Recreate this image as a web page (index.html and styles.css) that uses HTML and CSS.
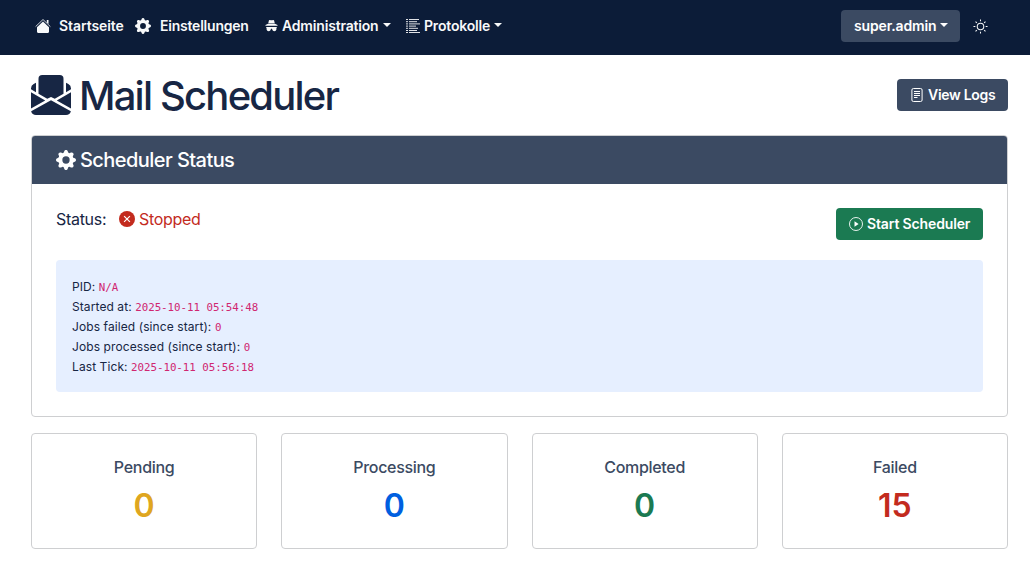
FILE: index.html
```html
<!DOCTYPE html>
<html lang="de">
<head>
<meta charset="utf-8">
<title>Mail Scheduler</title>
<link rel="stylesheet" href="styles.css">
</head>
<body>
<svg class="defs" width="0" height="0">
  <symbol id="gear" viewBox="0 0 16 16"><path d="M9.405 1.05c-.413-1.4-2.397-1.4-2.81 0l-.1.34a1.464 1.464 0 0 1-2.105.872l-.31-.17c-1.283-.698-2.686.705-1.987 1.987l.169.311c.446.82.023 1.841-.872 2.105l-.34.1c-1.4.413-1.4 2.397 0 2.81l.34.1a1.464 1.464 0 0 1 .872 2.105l-.17.31c-.698 1.283.705 2.686 1.987 1.987l.311-.169a1.464 1.464 0 0 1 2.105.872l.1.34c.413 1.4 2.397 1.4 2.81 0l.1-.34a1.464 1.464 0 0 1 2.105-.872l.31.17c1.283.698 2.686-.705 1.987-1.987l-.169-.311a1.464 1.464 0 0 1 .872-2.105l.34-.1c1.4-.413 1.4-2.397 0-2.81l-.34-.1a1.464 1.464 0 0 1-.872-2.105l.17-.31c.698-1.283-.705-2.686-1.987-1.987l-.311.169a1.464 1.464 0 0 1-2.105-.872zM8 10.93a2.929 2.929 0 1 1 0-5.86 2.929 2.929 0 0 1 0 5.858z"/></symbol>
</svg>
<nav class="navbar">
  <a class="nav-link home"><svg class="icon-home" viewBox="0 0 16 16"><path d="M8 3.600l6 5.700v4.400c0 .7-.5 1.200-1.200 1.200H3.200c-.7 0-1.200-.5-1.200-1.200V9.300z"/><path class="roof" d="M.6 8.600 8 1.500l7.400 7.100"/><path d="M11.800 2H13.500v4l-1.700-1.600z"/></svg><span>Startseite</span></a>
  <a class="nav-link settings"><svg class="icon-gear"><use href="#gear"/></svg><span>Einstellungen</span></a>
  <a class="nav-link admin"><svg class="icon-spy" viewBox="0 0 14 14"><path d="M4.200 1.200Q4.500.4 5.300.6 7 1.100 8.700.6 9.500.4 9.800 1.200L10.500 4H3.500zM3.300 4.700h7.400L13.500 6v.7H.5V6zM1.200 8h11.600v.9h-.5v1.900a2.300 2.300 0 0 1-4.500 0L7.500 9.900h-1l-.3.9a2.300 2.300 0 0 1-4.500 0V8.900h-.5z"/></svg><span>Administration</span><i class="caret"></i></a>
  <a class="nav-link logs"><svg class="icon-list" viewBox="0 0 14 14"><path d="M0 .5h2M0 2.700h2M0 4.900h2M0 7.100h2M0 9.300h2M0 11.500h2M0 13.500h2M3 .5h10M3 2.700h8M3 4.900h11M3 7.100h7M3 9.300h9M3 11.500h8M3 13.500h11"/></svg><span>Protokolle</span><i class="caret"></i></a>
  <div class="nav-end">
    <button class="btn btn-slate user"><span>super.admin</span><i class="caret"></i></button>
    <svg class="icon-sun" viewBox="0 0 16 16"><circle cx="8" cy="8" r="3.500"/><path d="M8 .5v2M8 13.500v2M.5 8h2M13.500 8h2M2.700 2.700l1.400 1.400M11.900 11.900l1.400 1.400M2.700 13.300l1.400-1.400M11.900 4.100l1.400-1.400"/></svg>
  </div>
</nav>
<main class="page">
  <header class="page-head">
    <h1><svg class="icon-mail" viewBox="0 0 16 16"><path d="M6.500 9.500 3 7.500v-6A1.500 1.500 0 0 1 4.500 0h7A1.500 1.500 0 0 1 13 1.500v6l-3.500 2L8 8.750zM1.059 3.635 2 3.133v3.753L0 5.713V5.400a2 2 0 0 1 1.059-1.765M16 5.713l-2 1.173V3.133l.941.502A2 2 0 0 1 16 5.400zm0 1.160-5.693 3.337L16 13.372v-6.500Zm-8 3.199 7.941 4.412A2 2 0 0 1 14 16H2a2 2 0 0 1-1.941-1.516zm-8 3.300 5.693-3.162L0 6.873v6.500Z"/></svg><span>Mail Scheduler</span></h1>
    <button class="btn btn-slate view"><svg class="icon-file" viewBox="0 0 14 14"><rect x="1.900" y=".5" width="10.200" height="13" rx="1.500"/><path d="M4 3.500h6M4 5.500h6M4 7.500h6M4 9.500h3.500"/></svg><span>View Logs</span></button>
  </header>
  <section class="card status-card">
    <h2><svg class="icon-gear-lg"><use href="#gear"/></svg><span>Scheduler Status</span></h2>
    <div class="card-body">
      <div class="status-row">
        <p class="status"><span class="label">Status:</span><span class="stopped"><svg class="icon-x" viewBox="0 0 16 16"><circle cx="8" cy="8" r="8"/><path d="M5.100 5.100l5.800 5.800M10.900 5.100l-5.800 5.800"/></svg><span>Stopped</span></span></p>
        <button class="btn btn-green start"><svg class="icon-play" viewBox="0 0 14 14"><circle cx="7" cy="7" r="6.500"/><path d="M5.500 4.300v5.400L9.600 7z"/></svg><span>Start Scheduler</span></button>
      </div>
      <div class="info">
        <div>PID: <code>N/A</code></div>
        <div>Started at: <code>2025-10-11 05:54:48</code></div>
        <div>Jobs failed (since start): <code>0</code></div>
        <div>Jobs processed (since start): <code>0</code></div>
        <div>Last Tick: <code>2025-10-11 05:56:18</code></div>
      </div>
    </div>
  </section>
  <section class="stats">
    <div class="card stat"><h3>Pending</h3><p class="pending">0</p></div>
    <div class="card stat"><h3>Processing</h3><p class="processing">0</p></div>
    <div class="card stat"><h3>Completed</h3><p class="completed">0</p></div>
    <div class="card stat"><h3>Failed</h3><p class="failed">15</p></div>
  </section>
</main>
</body>
</html>
```
FILE: styles.css
```css
* { box-sizing: border-box; }
body { margin: 0; background: #fff; color: #172644; font: 16px/24px Inter, "Liberation Sans", sans-serif; }
h1, h2, h3, p { margin: 0; font-weight: 500; }
.defs { display: block; position: absolute; }
svg { flex: none; fill: currentColor; }
.navbar { display: flex; align-items: center; height: 55px; padding: 0 42px 3px 35px; background: #0c1c38; color: #f8f9fa; }
.nav-link { display: flex; align-items: center; font-size: 14px; line-height: 20px; font-weight: 600; white-space: nowrap; letter-spacing: -0.18px; }
.caret { flex: none; border-top: 4px solid; border-left: 4px solid transparent; border-right: 4px solid transparent; margin-bottom: 3px; }
.home { width: 100px; gap: 8px; letter-spacing: -0.08px; }
.settings { width: 130px; gap: 9px; letter-spacing: -0.22px; }
.admin { width: 141px; gap: 4px; }
.logs { gap: 4px; }
.icon-home { width: 16px; height: 16px; }
.roof, .icon-list, .icon-sun, .icon-file { fill: none; stroke: currentColor; }
.roof { stroke-width: 1; opacity: .8; }
.icon-gear { width: 16px; height: 16px; }
.icon-spy { width: 13px; height: 14px; }
.icon-list { width: 14px; height: 14px; stroke-width: .9; }
.nav-end { display: flex; align-items: center; gap: 13px; margin-left: auto; }
.icon-sun { width: 15px; height: 15px; stroke-width: 1.1; }
.btn { display: flex; align-items: center; height: 32px; border: 0; border-radius: 4px; padding: 0 13px; color: #fff; font: 600 14px/20px Inter, "Liberation Sans", sans-serif; white-space: nowrap; gap: 4px; }
.btn-slate { background: #3b4a62; }
.btn-green { background: #1b7a52; }
.user { width: 119px; letter-spacing: -0.15px; }
.view { width: 111px; letter-spacing: -0.3px; }
.start { width: 147px; letter-spacing: -0.14px; }
.page { padding: 17px 22px 0 31px; }
.page-head { display: flex; justify-content: space-between; align-items: flex-start; height: 63px; }
.page-head .btn { margin-top: 7px; }
h1 { display: flex; align-items: center; gap: 8px; font-size: 40px; line-height: 48px; letter-spacing: -1.8px; }
.icon-mail { width: 40px; height: 40px; margin-top: -2px; }
.icon-file { width: 14px; height: 14px; }
.card { border: 1px solid #cecfd1; border-radius: 4px; background: #fff; }
.status-card { height: 282px; overflow: hidden; }
h2 { display: flex; align-items: center; gap: 4px; height: 48px; padding: 0 24px; background: #3b4a62; color: #fff; font-size: 20px; line-height: 24px; letter-spacing: -0.56px; }
.icon-gear-lg { width: 20px; height: 20px; }
.card-body { padding: 24px; }
.status-row { display: flex; justify-content: space-between; height: 52px; }
.status { display: flex; font-weight: 400; height: 22px; line-height: 22px; letter-spacing: -0.3px; }
.label { width: 63px; }
.stopped { display: flex; align-items: center; gap: 4px; color: #c32b1e; }
.icon-x { width: 16px; height: 16px; }
.icon-x path { stroke: #fff; stroke-width: 1.2; }
.icon-play { width: 14px; height: 14px; }
.icon-play circle { fill: none; stroke: #fff; stroke-width: .9; }
.info { height: 132px; padding: 17px 16px 15px; border-radius: 4px; background: #e6efff; font-size: 12px; line-height: 20px; letter-spacing: 0.09px; }
.info div { height: 20px; white-space: nowrap; }
code { color: #d02670; font: 10.8px/20px "DejaVu Sans Mono", monospace; letter-spacing: -0.03px; }
.stats { display: grid; grid-template-columns: repeat(4, 1fr); gap: 24px; margin-top: 16px; }
.stat { height: 116px; padding: 23px 24px; text-align: center; }
h3 { color: #3b4a62; font-size: 16px; line-height: 20px; letter-spacing: -0.3px; }
.stat p { margin-top: 10px; font-size: 32px; line-height: 38px; font-weight: 600; }
.pending { color: #dfa620; }
.processing { color: #005fe0; }
.completed { color: #1b7a52; }
.failed { color: #c32b1e; }
```
